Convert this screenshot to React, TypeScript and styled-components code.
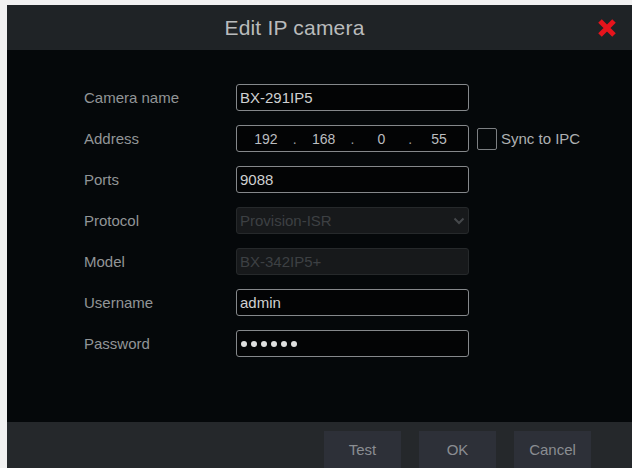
import React from "react";
import styled, { createGlobalStyle } from "styled-components";

const Global = createGlobalStyle`
  html, body { margin: 0; padding: 0; background: #f1f1f1; }
  body { font-family: "Liberation Sans", Arial, sans-serif; }
`;

const Dialog = styled.div`
  margin: 5px 0 0 7px;
  width: 625px;
  height: 463px;
  display: flex;
  flex-direction: column;
  background: #05080a;
  overflow: hidden;
`;

const TitleBar = styled.div`
  height: 45px;
  flex: none;
  display: flex;
  align-items: center;
  background: #1f2326;
`;

const Title = styled.div`
  flex: 1;
  text-align: center;
  font-size: 21px;
  color: #b9bbbc;
  letter-spacing: 0.2px;
`;

const Close = styled.div`
  width: 50px;
  height: 45px;
  display: flex;
  align-items: center;
  justify-content: center;
`;

const Body = styled.div`
  flex: 1;
  padding: 34px 0 0 77px;
  display: grid;
  grid-template-columns: 152px 233px auto;
  grid-auto-rows: 27px;
  row-gap: 14px;
  align-content: start;
`;

const Label = styled.div`
  grid-column: 1;
  display: flex;
  align-items: center;
  font-size: 15px;
  color: #929597;
`;

const Field = styled.div<{ $disabled?: boolean }>`
  grid-column: 2;
  box-sizing: border-box;
  height: 27px;
  display: flex;
  align-items: center;
  padding: 0 3px;
  border: ${(p) => (p.$disabled ? "1.5px solid #26292b" : "1.5px solid #85888b")};
  border-radius: 3px;
  background: ${(p) => (p.$disabled ? "#17191b" : "#030405")};
  color: ${(p) => (p.$disabled ? "#3d4043" : "#cfd0d1")};
  font-size: 15px;
`;

const Segment = styled.div`
  flex: 1;
  text-align: center;
  font-size: 14px;
  color: #bcbec0;
`;

const Sep = styled.div`
  width: 6px;
  text-align: center;
  font-size: 14px;
  color: #9a9c9e;
`;

const Value = styled.span`
  flex: 1;
`;

const Extra = styled.div`
  grid-column: 3;
  display: flex;
  align-items: center;
  padding-left: 8px;
`;

const Check = styled.div`
  box-sizing: border-box;
  width: 20px;
  height: 22px;
  border: 1.5px solid #7c7f82;
  border-radius: 2px;
`;

const CheckText = styled.span`
  margin-left: 4px;
  font-size: 15px;
  color: #aeb0b2;
`;

const Dots = styled.div`
  display: flex;
  gap: 4px;
  padding-left: 1px;
`;

const Dot = styled.span`
  width: 6px;
  height: 6px;
  border-radius: 50%;
  background: #e0e0e0;
`;

const Footer = styled.div`
  height: 46px;
  flex: none;
  box-sizing: border-box;
  background: #25282b;
  display: flex;
  justify-content: flex-end;
  align-items: flex-start;
  gap: 18px;
  padding: 9px 41px 0 0;
`;

const Button = styled.div`
  width: 77px;
  height: 37px;
  display: flex;
  align-items: center;
  justify-content: center;
  background: #2d3038;
  color: #8a8d92;
  font-size: 15px;
`;

const Chevron = () => (
  <svg width="12" height="8" viewBox="0 0 12 8">
    <path d="M1.5 1.5 L6 6 L10.5 1.5" fill="none" stroke="#45484b" strokeWidth="2" />
  </svg>
);

const RedX = () => (
  <svg width="20" height="20" viewBox="0 0 20 20">
    <path d="M3 3 L17 17 M17 3 L3 17" stroke="#e6141c" strokeWidth="5" strokeLinecap="butt" />
  </svg>
);

export default function App() {
  return (
    <>
      <Global />
      <Dialog>
        <TitleBar>
          <Title>Edit IP camera</Title>
          <Close>
            <RedX />
          </Close>
        </TitleBar>
        <Body>
          <Label>Camera name</Label>
          <Field>BX-291IP5</Field>

          <Label>Address</Label>
          <Field>
            <Segment>192</Segment>
            <Sep>.</Sep>
            <Segment>168</Segment>
            <Sep>.</Sep>
            <Segment>0</Segment>
            <Sep>.</Sep>
            <Segment>55</Segment>
          </Field>
          <Extra>
            <Check />
            <CheckText>Sync to IPC</CheckText>
          </Extra>

          <Label>Ports</Label>
          <Field>9088</Field>

          <Label>Protocol</Label>
          <Field $disabled>
            <Value>Provision-ISR</Value>
            <Chevron />
          </Field>

          <Label>Model</Label>
          <Field $disabled>BX-342IP5+</Field>

          <Label>Username</Label>
          <Field>admin</Field>

          <Label>Password</Label>
          <Field>
            <Dots>
              {Array.from({ length: 6 }).map((_, i) => (
                <Dot key={i} />
              ))}
            </Dots>
          </Field>
        </Body>
        <Footer>
          <Button>Test</Button>
          <Button>OK</Button>
          <Button>Cancel</Button>
        </Footer>
      </Dialog>
    </>
  );
}
